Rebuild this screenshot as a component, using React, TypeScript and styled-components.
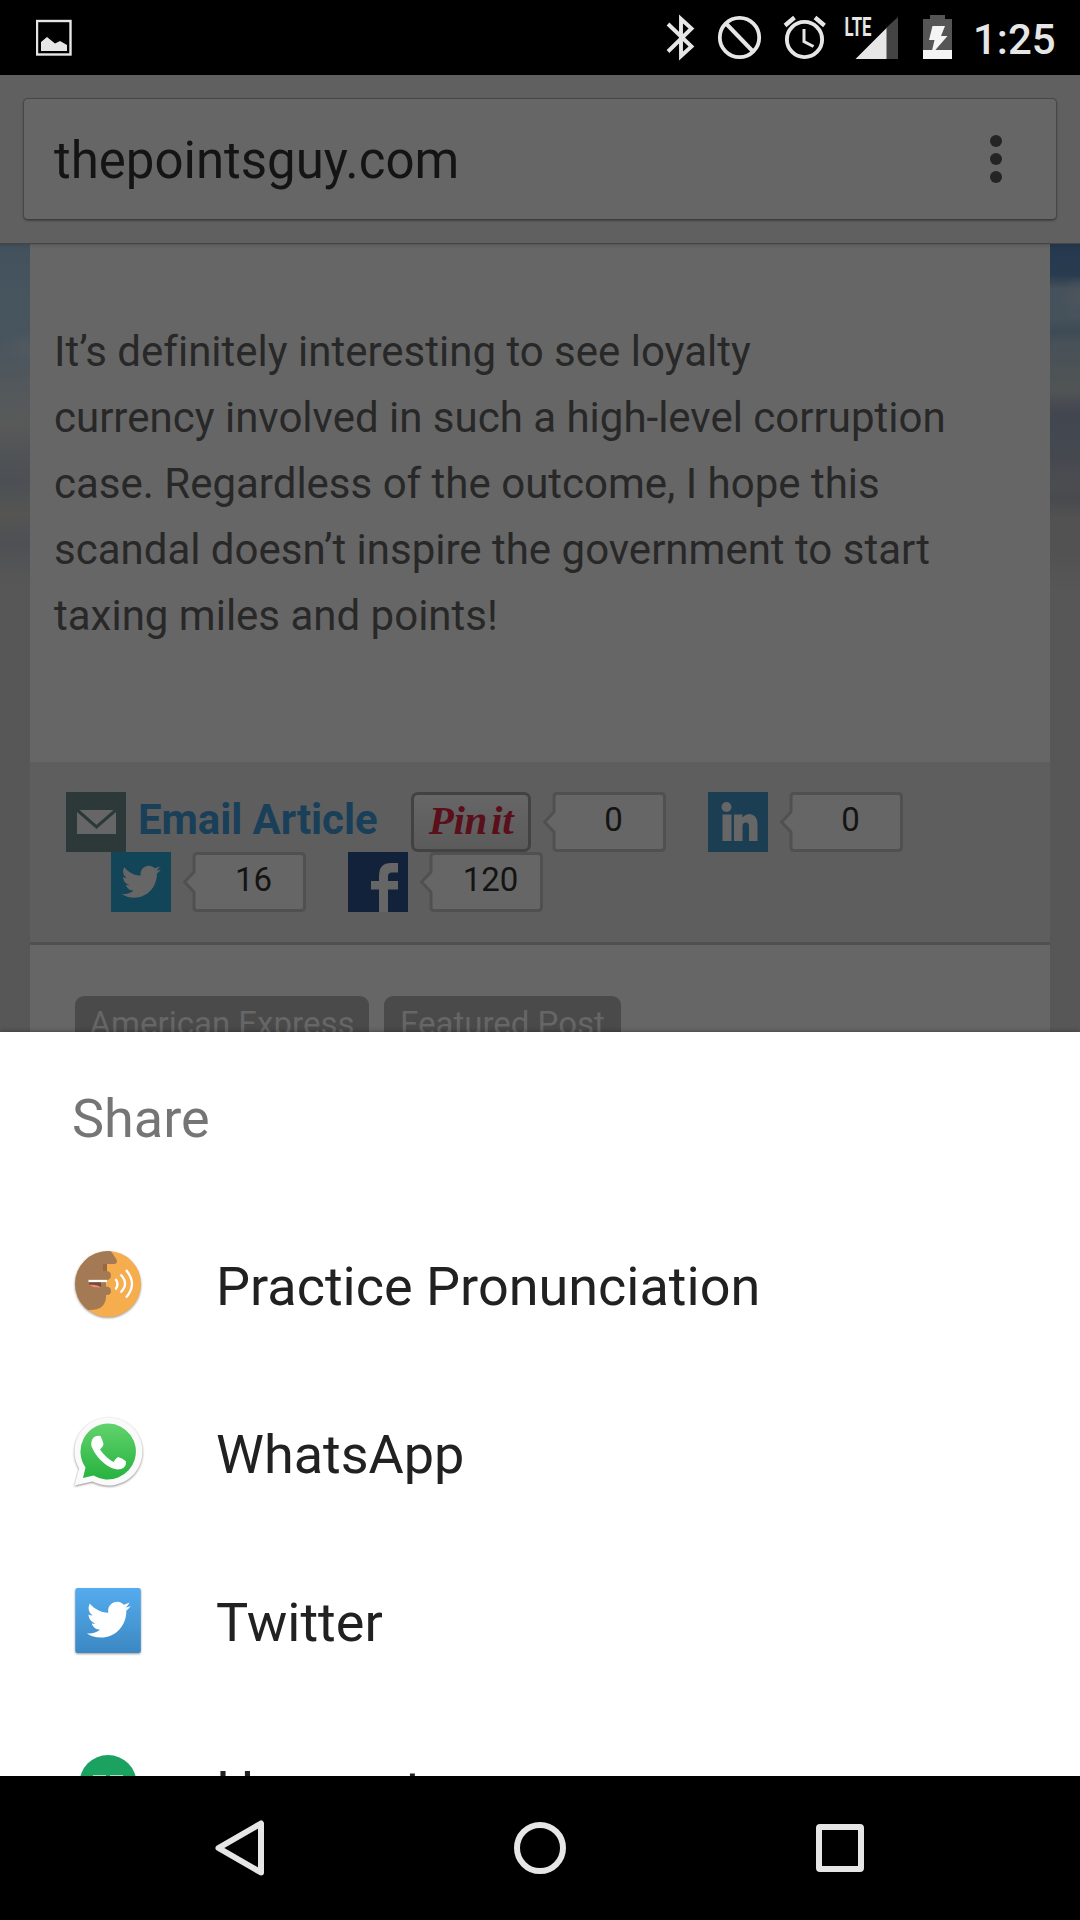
import React from "react";
import styled, { createGlobalStyle } from "styled-components";

const Global = createGlobalStyle`
  * { box-sizing: border-box; }
  body { margin: 0; background: #000; }
`;

const Screen = styled.div`
  width: 1080px;
  height: 1920px;
  display: flex;
  flex-direction: column;
  overflow: hidden;
  font-family: Roboto, "Noto Sans", sans-serif;
  font-variant-ligatures: none;
  background: #000;
`;

const StatusBar = styled.header`
  height: 75px;
  flex: none;
  display: flex;
  justify-content: space-between;
  background: #000;
  padding-left: 36px;
  padding-right: 24px;
`;

const StatusIcons = styled.div`
  display: flex;
`;

const Clock = styled.span`
  color: #e6e6e6;
  font-size: 42px;
  font-weight: 500;
  line-height: 80px;
  margin-left: 21px;
  width: 83px;
  white-space: nowrap;
`;

const Toolbar = styled.div`
  height: 168px;
  flex: none;
  padding: 23px 23px 24px;
  background: #606060;
  position: relative;
  z-index: 1;
  box-shadow: 0 1px 1px #454545, 0 2px 4px rgba(0, 0, 0, 0.15);
`;

const Omnibox = styled.div`
  height: 122px;
  display: flex;
  align-items: center;
  justify-content: space-between;
  padding: 4px 54px 0 30px;
  background: #666;
  border: 1px solid #474747;
  border-bottom-color: #3e3e3e;
  border-radius: 5px;
  box-shadow: 0 1px 2px rgba(0, 0, 0, 0.3);
`;

const Url = styled.span`
  font-size: 51px;
  line-height: 60px;
  color: #141414;
`;

const Dots = styled.div`
  display: flex;
  flex-direction: column;
  gap: 6px;
  margin-top: -4px;
`;

const Dot = styled.i`
  width: 12px;
  height: 12px;
  border-radius: 50%;
  background: #242424;
`;

const Page = styled.main`
  height: 789px;
  flex: none;
  overflow: hidden;
  display: grid;
  grid-template-columns: 30px 1020px 30px;
  background: #575757;
`;

const Sky = styled.div<{ $side: "left" | "right" }>`
  background: ${({ $side }) =>
    $side === "left"
      ? "radial-gradient(30px 16px at 30px 104px, rgba(90,95,98,.5), transparent), linear-gradient(#43515c 0, #46555e 60px, #48545e 95px, #50575c 130px, #575a5b 170px, #585858 185px, #4f5356 215px, #4c5055 240px, #555553 270px, #4e5053 300px, #565656 335px, #575757 350px)"
      : "radial-gradient(18px 22px at 28px 55px, rgba(78,84,92,.9), transparent), linear-gradient(#25384e 0, #283b4f 32px, #45515b 46px, #46525a 75px, #3c4b55 88px, #485159 100px, #4b5256 120px, #505455 148px, #42464f 170px, #44484f 210px, #4b4d50 240px, #484a4d 255px, #525253 275px, #525253 310px, #575757 350px)"};
`;

const Article = styled.article`
  background: #666;
`;

const Paragraph = styled.p`
  margin: 0;
  height: 519px;
  padding: 76px 0 0 24px;
  font-size: 42px;
  line-height: 66px;
  color: #282828;
  white-space: pre-line;
`;

const ShareStrip = styled.section`
  height: 183px;
  padding: 30px 0 0 36px;
  background: #5e5e5e;
  border-bottom: 3px solid #505050;
`;

const ShareRow = styled.div<{ $indent?: number }>`
  display: flex;
  height: 60px;
  padding-left: ${({ $indent }) => $indent ?? 0}px;
`;

const Tile = styled.div<{ $bg: string; $ml?: number }>`
  width: 60px;
  height: 60px;
  flex: none;
  margin-left: ${({ $ml }) => $ml ?? 0}px;
  background: ${({ $bg }) => $bg};
  svg { display: block; }
`;

const EmailLink = styled.span`
  width: 273px;
  margin-left: 12px;
  font-size: 42px;
  font-weight: 700;
  line-height: 55px;
  letter-spacing: -0.1px;
  color: #1a3f59;
  white-space: nowrap;
`;

const PinButton = styled.div`
  width: 120px;
  height: 60px;
  flex: none;
  display: flex;
  align-items: center;
  justify-content: center;
  border: 3px solid #424242;
  border-radius: 7px;
  background: linear-gradient(#666, #5b5b5b);
`;

const Bubble = styled.div`
  width: 123px;
  height: 60px;
  flex: none;
  margin-left: 12px;
  display: grid;
  > * { grid-area: 1 / 1; }
  svg { display: block; }
`;

const Count = styled.span`
  padding-left: 18px;
  text-align: center;
  font-size: 33px;
  line-height: 56px;
  color: #141414;
`;

const Tags = styled.div`
  display: flex;
  gap: 15px;
  padding: 51px 0 0 45px;
`;

const Tag = styled.span<{ $w: number }>`
  width: ${({ $w }) => $w}px;
  height: 60px;
  text-align: center;
  border-radius: 9px;
  background: #4a4a4a;
  color: #666;
  font-size: 33px;
  line-height: 56px;
  white-space: nowrap;
`;

const Sheet = styled.section`
  height: 744px;
  flex: none;
  overflow: hidden;
  background: #fff;
  position: relative;
  z-index: 1;
  box-shadow: 0 0 5px rgba(0, 0, 0, 0.4);
`;

const SheetTitle = styled.h1`
  margin: 0;
  height: 168px;
  padding: 3px 0 0 72px;
  font-size: 54px;
  font-weight: 400;
  line-height: 168px;
  color: #757575;
`;

const ShareTarget = styled.div`
  height: 168px;
  display: flex;
  align-items: center;
  padding-left: 72px;
  gap: 72px;
  svg { flex: none; overflow: visible; }
`;

const TargetName = styled.span`
  font-size: 54px;
  line-height: 64px;
  padding-top: 6px;
  color: #212121;
  white-space: nowrap;
`;

const NavBar = styled.nav`
  height: 144px;
  flex: none;
  display: flex;
  justify-content: center;
  background: #000;
  svg { display: block; }
`;

const BIRD =
  "M23.954 4.569c-.885.389-1.83.654-2.825.775 1.014-.611 1.794-1.574 2.163-2.723-.951.555-2.005.959-3.127 1.184-.896-.959-2.173-1.559-3.591-1.559-2.717 0-4.92 2.203-4.92 4.917 0 .39.045.765.127 1.124C7.691 8.094 4.066 6.13 1.64 3.161c-.427.722-.666 1.561-.666 2.475 0 1.71.87 3.213 2.188 4.096-.807-.026-1.566-.248-2.228-.616v.061c0 2.385 1.693 4.374 3.946 4.827-.413.111-.849.171-1.296.171-.314 0-.615-.03-.916-.086.631 1.953 2.445 3.377 4.604 3.417-1.68 1.319-3.809 2.105-6.102 2.105-.39 0-.779-.023-1.17-.067 2.189 1.394 4.768 2.209 7.557 2.209 9.054 0 13.999-7.496 13.999-13.986 0-.209 0-.42-.015-.63.961-.689 1.8-1.56 2.46-2.548l-.047-.02z";

const PictureIcon = () => (
  <svg width="36" height="75" viewBox="36 0 36 75">
    <rect x="37" y="21" width="33.5" height="33.5" fill="none" stroke="#e6e6e6" strokeWidth="2.4" />
    <path d="M41 42l6-5 8 6.5 5-2.5 7 4v6H41z" fill="#e6e6e6" />
  </svg>
);

const StatusGlyphs = () => (
  <svg width="286" height="75" viewBox="666 0 286 75" fill="none" stroke="#e6e6e6">
    <path d="M668 24l23.500 22.500L681 56V19l10.500 9.500L668 51.500" strokeWidth="3.900" />
    <circle cx="739.500" cy="37.500" r="19.700" strokeWidth="3.800" />
    <path d="M726 23.500l27 28" strokeWidth="4" />
    <circle cx="804.500" cy="39.500" r="17.600" strokeWidth="3.900" />
    <path d="M804 29v12.500l9.500 5" strokeWidth="3" />
    <path d="M785 25.500l9.500-8M824.500 25.500l-9.500-8" strokeWidth="4.300" />
    <g stroke="none">
      <path d="M898 17v42h-12V28z" fill="#444" />
      <path d="M886.500 28v31H855.500z" fill="#e6e6e6" />
      <path d="M923 19h7v-4h15v4h7v40h-29z" fill="#555" />
      <path d="M923 50h29v9h-29z" fill="#f4f4f4" />
      <path d="M932.500 26h12.500l-4 10h6.500L931 55l3.500-15h-5.500z" fill="#f4f4f4" />
      <text x="844.5" y="35.500" fontSize="25.500" fontWeight="700" fontFamily="Roboto, sans-serif" textLength="27" lengthAdjust="spacingAndGlyphs" fill="#e6e6e6">LTE</text>
    </g>
  </svg>
);

const CountBubble = ({ value }: { value: string }) => (
  <Bubble>
    <svg width="123" height="60">
      <path
        d="M14 1.500h104q3.500 0 3.500 3.500v50q0 3.500-3.500 3.500H14q-3 0-3-3V40L1.500 30 11 20V4.500q0-3 3-3z"
        fill="#666"
        stroke="#505050"
        strokeWidth="3"
      />
    </svg>
    <Count>{value}</Count>
  </Bubble>
);

const PinScript = styled.span`
  font-family: "Liberation Serif", serif;
  font-style: italic;
  font-weight: 700;
  font-size: 41px;
  line-height: 40px;
  letter-spacing: -0.3px;
  word-spacing: -6px;
  color: #5a0f1a;
  white-space: nowrap;
  margin-top: -4px;
`;

const PracticeIcon = () => (
  <svg width="72" height="72" viewBox="0 0 72 72" style={{ filter: "drop-shadow(0 1px 1px rgba(0,0,0,.4))" }}>
    <defs>
      <clipPath id="face"><circle cx="36" cy="36" r="33" /></clipPath>
    </defs>
    <circle cx="36" cy="36" r="33" fill="#f6ad4e" />
    <g clipPath="url(#face)">
      <path d="M0 0h37l7.500 11.500q1.500 4.500-2.500 4.500H35v7q4 .5 4 4.500t-5 5v6q5 0 5 4.500t-5 4v2.500Q33 62 18 62H0z" fill="#a47a54" />
      <path d="M31 16h4v7h-4z" fill="#976842" />
      <path d="M17 34h12v5h-9q-3-1-3-5z" fill="#7a4a32" />
      <path d="M17 37q8-1 12 2.500-10 0-12-2.500z" fill="#f08a78" />
    </g>
    <g fill="none" stroke="#fff" strokeWidth="2.300">
      <path d="M16.500 33H35" />
      <path d="M43.500 31q4 5 0 10.500M48.500 26.500q9 9 0 18M54 22q12 14 0 27.500" />
    </g>
  </svg>
);

const WhatsAppIcon = () => (
  <svg width="72" height="72" viewBox="0 0 72 72" style={{ filter: "drop-shadow(0 1px 1px rgba(0,0,0,.45))" }}>
    <defs>
      <linearGradient id="wa" x1="0" y1="0" x2="0" y2="1">
        <stop stopColor="#61d36c" />
        <stop offset="1" stopColor="#27b23f" />
      </linearGradient>
    </defs>
    <g transform="translate(.5 -.5)">
      <path d="M36 2A34 34 0 1 1 20 66L2 70 6.500 53A34 34 0 0 1 36 2z" fill="#fafafa" />
      <path d="M36 8a28 28 0 1 1-15 52l-10.500 2.500L13 52A28 28 0 0 1 36 8z" fill="url(#wa)" />
      <path d="M21 22q3-2.500 7-1.500 2 4 3 8 0 2-3.500 5.500Q33 42 41 46.500q2-3.500 4.500-5 5 1 8 4.500.5 6-5 7.500-7 2-16-5T19 31q-1-5 2-9z" fill="#fff" />
    </g>
  </svg>
);

const TwitterIcon = () => (
  <svg width="72" height="72" viewBox="0 0 72 72" style={{ filter: "drop-shadow(0 1px 1px rgba(0,0,0,.4))" }}>
    <defs>
      <linearGradient id="tw" x1="0" y1="0" x2="0" y2="1">
        <stop stopColor="#55acee" />
        <stop offset="1" stopColor="#3b88c3" />
      </linearGradient>
    </defs>
    <rect x="3.300" y="4" width="65.500" height="65" rx="2.500" fill="url(#tw)" />
    <path transform="translate(14.800 13.700) scale(1.830)" d={BIRD} fill="#fff" />
  </svg>
);

const HangoutsIcon = () => (
  <svg width="72" height="72" viewBox="0 0 72 72">
    <circle cx="36" cy="31.500" r="28.500" fill="#1ba261" />
    <path d="M21 23h13v12H21zM38 23h13v12H38z" fill="#a9dcc3" />
  </svg>
);

const targets = [
  { name: "Practice Pronunciation", Icon: PracticeIcon },
  { name: "WhatsApp", Icon: WhatsAppIcon },
  { name: "Twitter", Icon: TwitterIcon },
  { name: "Hangouts", Icon: HangoutsIcon },
];

export default function App() {
  return (
    <Screen>
      <Global />
      <StatusBar>
        <PictureIcon />
        <StatusIcons>
          <StatusGlyphs />
          <Clock>1:25</Clock>
        </StatusIcons>
      </StatusBar>
      <Toolbar>
        <Omnibox>
          <Url>thepointsguy.com</Url>
          <Dots><Dot /><Dot /><Dot /></Dots>
        </Omnibox>
      </Toolbar>
      <Page>
        <Sky $side="left" />
        <Article>
          <Paragraph>
            {"It’s definitely interesting to see loyalty\ncurrency involved in such a high-level corruption\ncase. Regardless of the outcome, I hope this\nscandal doesn’t inspire the government to start\ntaxing miles and points!"}
          </Paragraph>
          <ShareStrip>
            <ShareRow>
              <Tile $bg="#2d3839">
                <svg width="60" height="60">
                  <path d="M11 18h39v24H11z" fill="#666" />
                  <path d="M10.500 17.500L30.500 35l20-17.500" fill="none" stroke="#2d3839" strokeWidth="3" />
                </svg>
              </Tile>
              <EmailLink>Email Article</EmailLink>
              <PinButton><PinScript>Pin it</PinScript></PinButton>
              <CountBubble value="0" />
              <Tile $bg="#1b3e52" $ml={42}>
                <svg width="60" height="60" fill="#666">
                  <circle cx="18.500" cy="15" r="5" />
                  <path d="M14.500 22.500h9V49h-9zM26 22.500h8.500v3q3-3.500 7-3.500 8 1 8 10v17H41V34q0-3.500-3.200-3.500T34.500 34v15H26z" />
                </svg>
              </Tile>
              <CountBubble value="0" />
            </ShareRow>
            <ShareRow $indent={45}>
              <Tile $bg="#124557">
                <svg width="60" height="60">
                  <path transform="translate(10.500 10) scale(1.640)" d={BIRD} fill="#666" />
                </svg>
              </Tile>
              <CountBubble value="16" />
              <Tile $bg="#13223b" $ml={42}>
                <svg width="60" height="60">
                  <path d="M31 60V37.500h-8V29h8v-5q0-13 12-13h7v9.500h-6q-4 0-4 4V29h10v8.500H40V60z" fill="#666" />
                </svg>
              </Tile>
              <CountBubble value="120" />
            </ShareRow>
          </ShareStrip>
          <Tags>
            <Tag $w={294}>American Express</Tag>
            <Tag $w={237}>Featured Post</Tag>
          </Tags>
        </Article>
        <Sky $side="right" />
      </Page>
      <Sheet>
        <SheetTitle>Share</SheetTitle>
        {targets.map(({ name, Icon }) => (
          <ShareTarget key={name}>
            <Icon />
            <TargetName>{name}</TargetName>
          </ShareTarget>
        ))}
      </Sheet>
      <NavBar>
        <svg width="1080" height="144" fill="none" stroke="#e6e6e6" strokeWidth="6" strokeLinejoin="round">
          <path d="M261 47.500v49L218.500 72z" />
          <circle cx="540" cy="72" r="23" />
          <rect x="819" y="51" width="42" height="42" rx="1" />
        </svg>
      </NavBar>
    </Screen>
  );
}
